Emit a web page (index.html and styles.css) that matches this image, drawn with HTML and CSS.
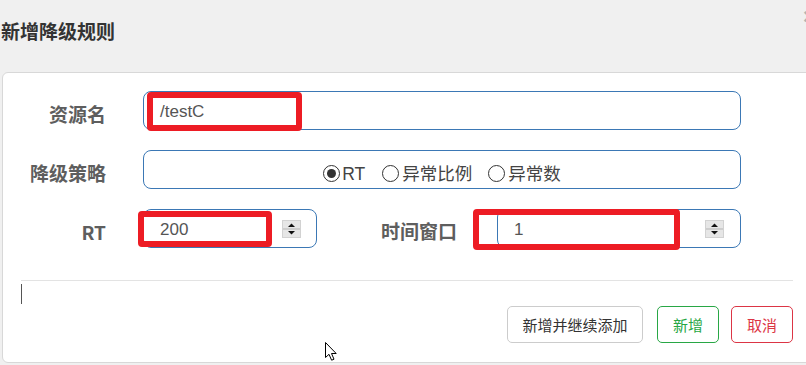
FILE: index.html
```html
<!DOCTYPE html>
<html lang="zh-CN">
<head>
<meta charset="utf-8">
<title>新增降级规则</title>
<link rel="stylesheet" href="styles.css">
</head>
<body>
<div class="modal">
  <div class="modal-header">
    <h4 class="title">新增降级规则</h4>
    <button class="close" type="button">×</button>
  </div>
  <div class="panel">
    <div class="row">
      <label class="label">资源名</label>
      <div class="field wide">
        <span class="value">/testC</span>
        <span class="mark mark-1"></span>
      </div>
    </div>
    <div class="row">
      <label class="label">降级策略</label>
      <div class="field wide radios">
        <span class="radio checked"></span><span class="rtext rt">RT</span>
        <span class="radio gap"></span><span class="rtext">异常比例</span>
        <span class="radio gap2"></span><span class="rtext">异常数</span>
      </div>
    </div>
    <div class="row">
      <label class="label">RT</label>
      <div class="field small spin">
        <span class="value">200</span>
        <svg class="spinner" width="19" height="18" viewBox="0 0 19 18"><rect x="0" y="0" width="19" height="18" fill="#e6e6e6"/><rect x="0.5" y="0.5" width="18" height="17" fill="none" stroke="#d2d2d2"/><line x1="1" y1="9" x2="18" y2="9" stroke="#b5b5b5"/><path d="M9.5 3.5 L13 7 L6 7 Z" fill="#111"/><path d="M6 11 L13 11 L9.5 14.5 Z" fill="#111"/></svg>
        <span class="mark mark-2"></span>
      </div>
      <label class="label2">时间窗口</label>
      <div class="field medium spin">
        <span class="value">1</span>
        <svg class="spinner" width="19" height="18" viewBox="0 0 19 18"><rect x="0" y="0" width="19" height="18" fill="#e6e6e6"/><rect x="0.5" y="0.5" width="18" height="17" fill="none" stroke="#d2d2d2"/><line x1="1" y1="9" x2="18" y2="9" stroke="#b5b5b5"/><path d="M9.5 3.5 L13 7 L6 7 Z" fill="#111"/><path d="M6 11 L13 11 L9.5 14.5 Z" fill="#111"/></svg>
        <span class="mark mark-3"></span>
      </div>
    </div>
    <div class="footer">
      <span class="caret"></span>
      <button class="btn btn-default" type="button">新增并继续添加</button>
      <button class="btn btn-success" type="button">新增</button>
      <button class="btn btn-danger" type="button">取消</button>
    </div>
    <svg class="pointer" width="14" height="20" viewBox="0 0 14 20"><path d="M0.5 0.5 L0.5 15.5 L4 12.3 L6.6 18.2 L9 17.2 L6.5 11.5 L11.2 11.5 Z" fill="#fff" stroke="#000" stroke-width="1" stroke-linejoin="round"/></svg>
  </div>
</div>
</body>
</html>
```

FILE: styles.css
```css
html, body {
  margin: 0;
  padding: 0;
}
body {
  width: 806px;
  height: 365px;
  overflow: hidden;
  background: #f0f0f0;
  font-family: "Liberation Sans", "Noto Sans CJK SC", sans-serif;
  color: #333;
}
.modal {
  width: 806px;
  height: 365px;
  position: relative;
}
.modal-header {
  height: 72px;
  width: 816px;
  display: flex;
  justify-content: space-between;
  align-items: flex-start;
  box-sizing: border-box;
}
.title {
  margin: 0;
  padding: 17px 0 0 1px;
  font-family: "Noto Sans CJK SC", sans-serif;
  font-size: 19px;
  line-height: 28px;
  font-weight: 700;
  color: #333;
}
.close {
  margin: 0;
  padding: 0;
  border: 0;
  background: none;
  font-family: "Liberation Sans", sans-serif;
  font-size: 22px;
  line-height: 22px;
  font-weight: 700;
  color: #b3b3b3;
  margin-top: 6px;
  width: 13px;
}
.panel {
  margin-left: 2px;
  width: 810px;
  height: 291px;
  box-sizing: border-box;
  border: 1px solid #d8d8d8;
  border-radius: 6px;
  background: #fff;
  padding-top: 18px;
  position: relative;
}
.row {
  display: flex;
  align-items: center;
  height: 39px;
  margin-bottom: 20px;
}
.label {
  width: 103px;
  margin-right: 37px;
  margin-top: 6px;
  text-align: right;
  font-family: "Noto Sans CJK SC", sans-serif;
  font-size: 19px;
  font-weight: 700;
  color: #5e5e5e;
  white-space: nowrap;
}
.label2 {
  margin-left: 64px;
  margin-right: 40px;
  margin-top: 4px;
  font-family: "Noto Sans CJK SC", sans-serif;
  font-size: 19px;
  font-weight: 700;
  color: #5e5e5e;
  white-space: nowrap;
}
.field {
  position: relative;
  height: 39px;
  box-sizing: border-box;
  border: 1px solid #3b78b5;
  border-radius: 8px;
  display: flex;
  align-items: center;
  padding-left: 16px;
  font-size: 17px;
  color: #555;
}
.wide { width: 598px; }
.small { width: 174px; }
.medium { width: 244px; }
.spin {
  justify-content: space-between;
  padding-right: 15px;
}
.medium.spin { padding-right: 16px; }
.value {
  font-family: "Liberation Sans", sans-serif;
  font-size: 17px;
  color: #555;
  margin-top: 2px;
}
.spinner {
  display: block;
}
.radios {
  justify-content: center;
  padding-left: 0;
  padding-top: 8px;
  color: #444;
}
.radio {
  width: 17px;
  height: 17px;
  box-sizing: border-box;
  border: 1.5px solid #333;
  border-radius: 50%;
  display: flex;
  align-items: center;
  justify-content: center;
  background: #fff;
  flex: none;
}
.radio.checked::after {
  content: "";
  width: 9px;
  height: 9px;
  border-radius: 50%;
  background: #333;
}
.radio.gap { margin-left: 17px; }
.radio.gap2 { margin-left: 16px; }
.rtext {
  margin-left: 3px;
  font-family: "Liberation Sans", "Noto Sans CJK SC", sans-serif;
  font-size: 17.5px;
  color: #444;
  line-height: 20px;
}
.rtext.rt { margin-left: 2px; }
.mark {
  position: absolute;
  box-sizing: border-box;
  border: 6px solid #ed1c24;
  border-radius: 4px;
  pointer-events: none;
}
.mark-1 { left: 3px; top: 0px; width: 155px; height: 39px; }
.mark-2 { left: -6px; top: 1px; width: 134px; height: 36px; }
.mark-3 { left: -25px; top: -1px; width: 207px; height: 41px; }
.footer {
  margin: 32px 18px 0 18px;
  border-top: 1px solid #e3e3e3;
  display: flex;
  align-items: flex-start;
}
.caret {
  display: block;
  width: 1px;
  height: 20px;
  margin-top: 3px;
  background: #555;
}
.btn {
  margin: 25px 0 0 0;
  height: 37px;
  box-sizing: border-box;
  padding: 0;
  border-radius: 5px;
  background: #fff;
  font-family: "Noto Sans CJK SC", sans-serif;
  font-size: 15px;
  line-height: 20px;
  white-space: nowrap;
  text-align: center;
  cursor: pointer;
}
.btn-default {
  margin-left: auto;
  border: 1px solid #cccccc;
  color: #333;
  width: 136px;
}
.btn-success {
  margin-left: 14px;
  border: 1px solid #28a745;
  color: #28a745;
  width: 62px;
}
.btn-danger {
  margin-left: 12px;
  border: 1px solid #dc3545;
  color: #dc3545;
  width: 62px;
}
.pointer {
  position: absolute;
  left: 322px;
  top: 269px;
}
```
